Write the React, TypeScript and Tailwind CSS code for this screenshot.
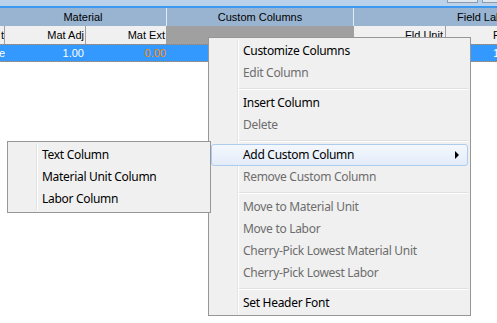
type Item = { label: string; disabled?: boolean; active?: boolean; sub?: boolean } | 'sep';

const menuItems: Item[] = [
  { label: 'Customize Columns' },
  { label: 'Edit Column', disabled: true },
  'sep',
  { label: 'Insert Column' },
  { label: 'Delete', disabled: true },
  'sep',
  { label: 'Add Custom Column', active: true, sub: true },
  { label: 'Remove Custom Column', disabled: true },
  'sep',
  { label: 'Move to Material Unit', disabled: true },
  { label: 'Move to Labor', disabled: true },
  { label: 'Cherry-Pick Lowest Material Unit', disabled: true },
  { label: 'Cherry-Pick Lowest Labor', disabled: true },
  'sep',
  { label: 'Set Header Font' },
];

const subItems = ['Text Column', 'Material Unit Column', 'Labor Column'];

const gutter =
  'bg-[linear-gradient(to_right,transparent_26px,#e2e3e3_26px,#e2e3e3_27px,#ffffff_27px,#ffffff_28px,transparent_28px)]';

function MenuRow({ item }: { item: Item }) {
  if (item === 'sep') {
    return (
      <div className="h-[8px] pl-[28px] pt-[4px]">
        <div className="h-[2px] border-t border-t-[#e0e0e0] border-b border-b-white" />
      </div>
    );
  }
  return (
    <div
      className={`h-[22px] flex items-center pl-[31px] pr-[8px] rounded-[3px] border ${
        item.active
          ? 'border-[#aecbf0] bg-gradient-to-b from-[#f4f8fd] to-[#e3ecf9]'
          : 'border-transparent'
      } ${item.disabled ? 'text-[#6d6d6d]' : 'text-black'}`}
    >
      <span>{item.label}</span>
      {item.sub && (
        <span className="ml-auto w-0 h-0 border-y-[4px] border-y-transparent border-l-[4px] border-l-black" />
      )}
    </div>
  );
}

export default function App() {
  return (
    <div className="relative w-[497px] h-[323px] overflow-hidden bg-white font-['Liberation_Sans',Arial,sans-serif] text-[11px] text-black">
      {/* window strip */}
      <div className="h-[6px] bg-[#b9d1ea] flex justify-end items-start">
        <div className="w-[31px] h-[3px] mr-[4px] border-x border-b border-[#8d9aa8] bg-[#dfe7f0]" />
        <div className="w-[15px] h-[3px] border-l border-b border-[#8d9aa8] bg-[#dfe7f0]" />
      </div>
      <div className="h-[2px] bg-[#3d98f2]" />

      {/* header band */}
      <div className="flex h-[18px] bg-[#99b4d1] whitespace-nowrap">
        <div className="w-[167px] shrink-0 flex items-center justify-center border-r border-r-[#e4ebf3]">Material</div>
        <div className="w-[187px] shrink-0 flex items-center justify-center border-r border-r-[#e4ebf3]">Custom Columns</div>
        <div className="w-[261px] shrink-0 flex items-center justify-center">Field Labor</div>
      </div>

      {/* column headers */}
      <div className="flex h-[18px] whitespace-nowrap">
        <div className="w-[5px] shrink-0 bg-[#f0f0f0] border-r border-r-[#a0a0a0] overflow-hidden flex items-center justify-end">t</div>
        <div className="w-[81px] shrink-0 bg-[#f0f0f0] border-r border-r-[#a0a0a0] flex items-center justify-end pr-[1px]">Mat Adj</div>
        <div className="w-[81px] shrink-0 bg-[#f0f0f0] border-r border-r-[#a0a0a0] flex items-center justify-end pr-[1px]">Mat Ext</div>
        <div className="w-[187px] shrink-0 bg-[#a0a0a0]" />
        <div className="w-[92px] shrink-0 bg-[#f0f0f0] border-r border-r-[#a0a0a0] flex items-center justify-end pr-[2px]">Fld Unit</div>
        <div className="w-[80px] shrink-0 bg-[#f0f0f0] flex items-center pl-[47px]">Fld Adj</div>
      </div>

      {/* selected row */}
      <div className="flex h-[18px] bg-[#3399ff] border-y border-dotted border-[#e8861c] text-white whitespace-nowrap">
        <div className="w-[5px] shrink-0 overflow-hidden flex items-center justify-end">e</div>
        <div className="w-[81px] shrink-0 flex items-center justify-end pr-[2px]">1.00</div>
        <div className="w-[81px] shrink-0 flex items-center justify-end pr-[1px] text-[#ff8a00]">0.00</div>
        <div className="w-[187px] shrink-0" />
        <div className="w-[92px] shrink-0" />
        <div className="w-[80px] shrink-0 flex items-center pl-[47px]">1.00</div>
      </div>

      {/* context menu */}
      <div className="absolute left-[208px] top-[37px] w-[263px] border border-[#979797] bg-[#f0f0f0] px-[2px] pt-[2px] pb-[1px] font-['Noto_Sans',sans-serif] text-[12px] tracking-[-0.3px] whitespace-nowrap">
        <div className={gutter}>
          {menuItems.map((item, i) => (
            <MenuRow key={i} item={item} />
          ))}
        </div>
      </div>

      {/* submenu */}
      <div className="absolute left-[7px] top-[141px] w-[204px] border border-[#979797] bg-[#f0f0f0] p-[2px] font-['Noto_Sans',sans-serif] text-[12px] tracking-[-0.3px] whitespace-nowrap">
        <div className={gutter}>
          {subItems.map((s) => (
            <div key={s} className="h-[22px] flex items-center pl-[32px]">
              {s}
            </div>
          ))}
        </div>
      </div>
    </div>
  );
}
